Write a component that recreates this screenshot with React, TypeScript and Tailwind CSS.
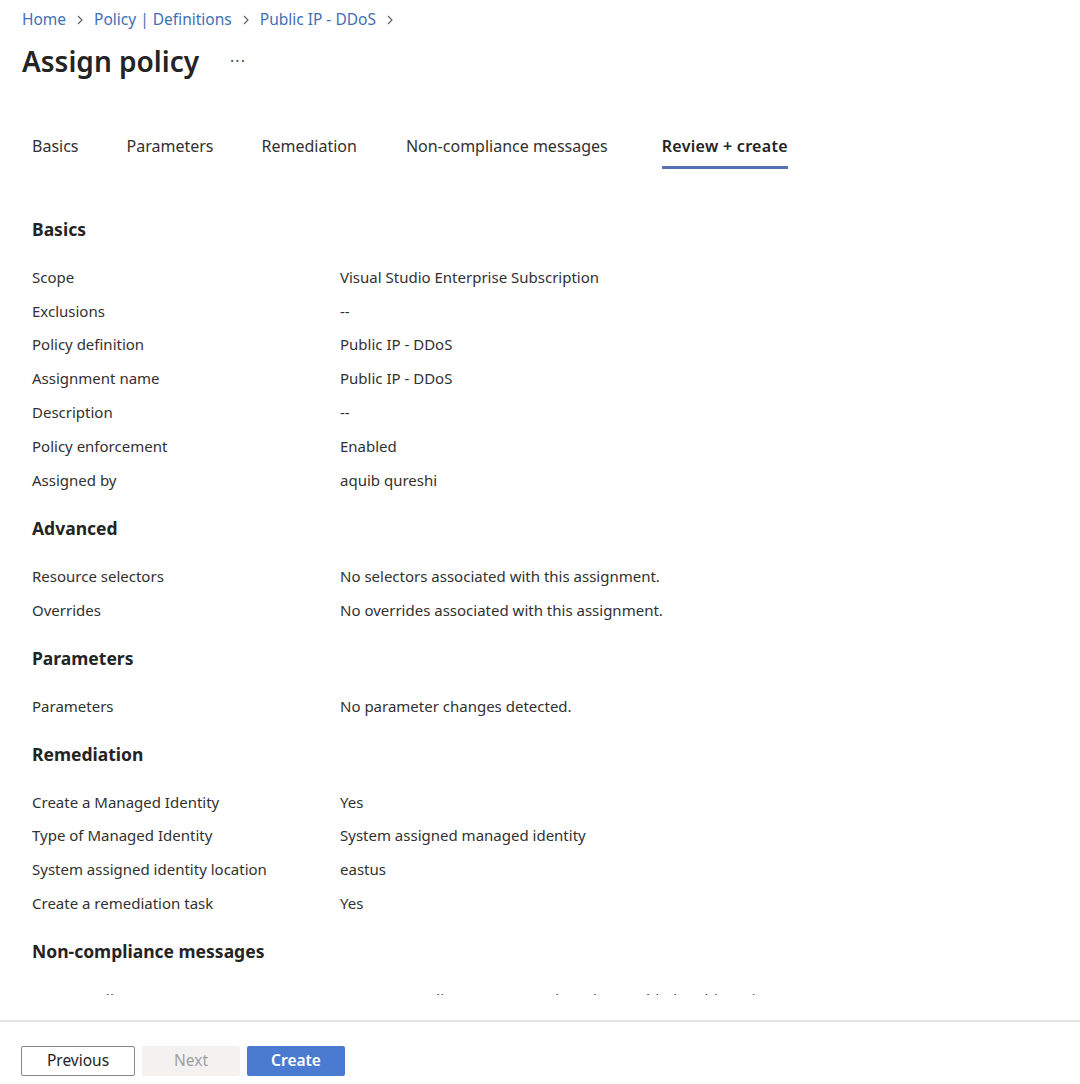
import React from "react";

const font = { fontFamily: '"Noto Sans", "Open Sans", sans-serif' };

type Row = [string, string];
const sections: { title: string; rows: Row[] }[] = [
  {
    title: "Basics",
    rows: [
      ["Scope", "Visual Studio Enterprise Subscription"],
      ["Exclusions", "--"],
      ["Policy definition", "Public IP - DDoS"],
      ["Assignment name", "Public IP - DDoS"],
      ["Description", "--"],
      ["Policy enforcement", "Enabled"],
      ["Assigned by", "aquib qureshi"],
    ],
  },
  {
    title: "Advanced",
    rows: [
      ["Resource selectors", "No selectors associated with this assignment."],
      ["Overrides", "No overrides associated with this assignment."],
    ],
  },
  {
    title: "Parameters",
    rows: [["Parameters", "No parameter changes detected."]],
  },
  {
    title: "Remediation",
    rows: [
      ["Create a Managed Identity", "Yes"],
      ["Type of Managed Identity", "System assigned managed identity"],
      ["System assigned identity location", "eastus"],
      ["Create a remediation task", "Yes"],
    ],
  },
  {
    title: "Non-compliance messages",
    rows: [["Non-compliance message", "No non-compliance messages have been added to this assignment."]],
  },
];

function Chevron() {
  return (
    <svg width="10" height="12" viewBox="0 0 10 12" className="mx-[9px]">
      <path d="M3 2 L7 6 L3 10" fill="none" stroke="#605e5c" strokeWidth="1.1" />
    </svg>
  );
}

export default function App() {
  const tabs = ["Basics", "Parameters", "Remediation", "Non-compliance messages", "Review + create"];
  const gaps = ["mr-[48px]", "mr-[48px]", "mr-[49px]", "mr-[54px]", ""];
  return (
    <div className="w-[1080px] h-[1084px] bg-white flex flex-col text-[#323130] overflow-hidden" style={font}>
      <div className="h-[995px] overflow-hidden flex flex-col shrink-0">
        <div className="pl-[22px] h-[40px] shrink-0 flex items-center text-[15.5px] text-[#3f6fb5]">
          <span>Home</span>
          <Chevron />
          <span>Policy | Definitions</span>
          <Chevron />
          <span>Public IP - DDoS</span>
          <Chevron />
        </div>
        <div className="pl-[22px] h-[42px] shrink-0 flex items-center">
          <span className="text-[28px] font-semibold text-[#242424] leading-none">Assign policy</span>
          <span className="ml-[31px] text-[16px] text-[#555] tracking-[1px] -mt-[1px]">···</span>
        </div>
        <div className="pl-[32px] mt-[49px] shrink-0 flex items-start h-[44px]">
          {tabs.map((t, i) => (
            <div key={t} className={`flex flex-col items-stretch ${gaps[i]}`}>
              <span
                className={`text-[16px] h-[30px] flex items-center ${i === 4 ? "font-semibold text-[#242424] tracking-[0.3px]" : "text-[#323130]"}`}
              >
                {t}
              </span>
              <div className={`h-[3px] mt-[5px] ${i === 4 ? "bg-[#5671b3]" : "bg-transparent"}`} />
            </div>
          ))}
        </div>
        <div className="pl-[32px] mt-[23px] flex flex-col shrink-0">
          {sections.map((s) => (
            <div key={s.title} className="flex flex-col shrink-0">
              <div className="h-[62px] shrink-0 flex items-center text-[17.5px] font-bold text-[#242424]">{s.title}</div>
              {s.rows.map(([l, v]) => (
                <div key={l} className="h-[33.9px] shrink-0 flex items-center text-[15px]">
                  <span className="w-[308px] shrink-0">{l}</span>
                  <span>{v}</span>
                </div>
              ))}
            </div>
          ))}
        </div>
      </div>
      <div className="mt-[25px] h-[2px] bg-[#e3e3e3] shrink-0" />
      <div className="pl-[21px] pt-[24px] flex gap-[7px] shrink-0">
        <button className="w-[114px] h-[30px] border border-[#8a8886] rounded-[2px] text-[15.5px] text-[#242424] flex items-center justify-center bg-white">
          Previous
        </button>
        <button className="w-[98px] h-[30px] rounded-[2px] bg-[#f3f2f1] text-[15.5px] text-[#a19f9d] flex items-center justify-center">
          Next
        </button>
        <button className="w-[98px] h-[30px] rounded-[2px] bg-[#4a7bd0] text-[15.5px] text-white font-semibold flex items-center justify-center">
          Create
        </button>
      </div>
    </div>
  );
}
